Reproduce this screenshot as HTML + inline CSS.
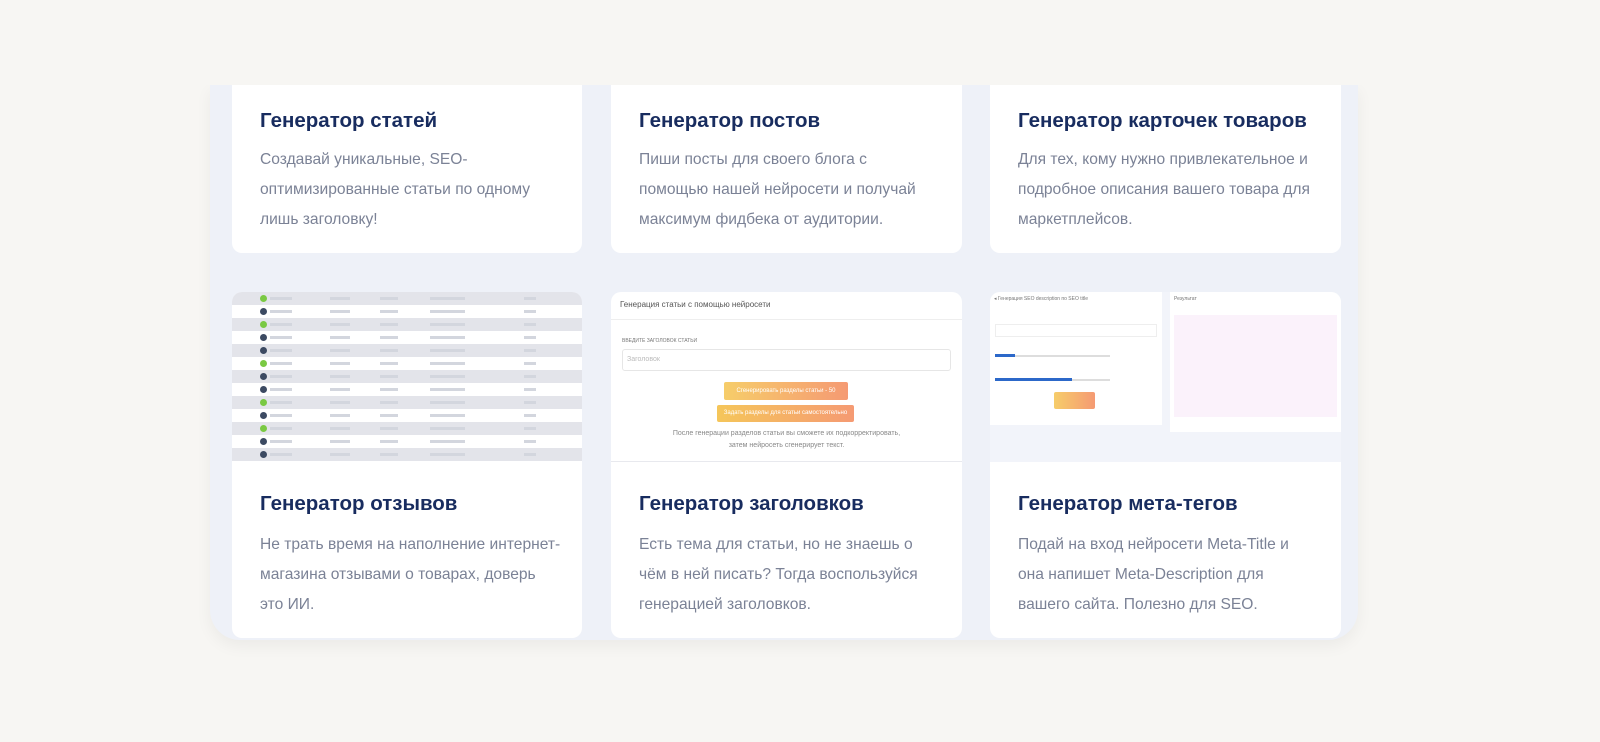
<!DOCTYPE html>
<html><head><meta charset="utf-8"><style>
*{margin:0;padding:0;box-sizing:border-box}
body{width:1600px;height:742px;background:#f7f6f3;font-family:"Liberation Sans",sans-serif;position:relative;overflow:hidden}
.panel{position:absolute;left:210px;top:85px;width:1148px;height:555px;background:#eef1f8;border-radius:0 0 30px 30px;box-shadow:0 6px 16px rgba(0,0,0,0.05)}
.card{position:absolute;background:#fff;border-radius:10px;overflow:hidden}
.card h3{position:absolute;left:28px;font-size:20.5px;font-weight:bold;color:#182c5f}
.card p{position:absolute;left:28px;font-size:15.6px;line-height:30px;color:#7b8296;white-space:nowrap}
.img{position:absolute;left:0;top:0;right:0;height:170px;overflow:hidden}
.row{height:13px;position:relative}
.row.g{background:#e3e4ea}
.row i{position:absolute;top:3px;left:28px;width:7px;height:7px;border-radius:50%;background:#3c4a62}
.row i.gr{background:#7ac943}
.row b{position:absolute;top:5px;height:3px;background:#d3d6de}
</style></head><body>
<div class="panel"></div>

<div class="card" style="left:232px;top:75px;width:350px;height:178px">
<h3 style="top:34px">Генератор статей</h3>
<p style="top:70px">Создавай уникальные, SEO-<br>оптимизированные статьи по одному<br>лишь заголовку!</p></div>
<div class="card" style="left:611px;top:75px;width:351px;height:178px">
<h3 style="top:34px">Генератор постов</h3>
<p style="top:70px">Пиши посты для своего блога с<br>помощью нашей нейросети и получай<br>максимум фидбека от аудитории.</p></div>
<div class="card" style="left:990px;top:75px;width:351px;height:178px">
<h3 style="top:34px">Генератор карточек товаров</h3>
<p style="top:70px">Для тех, кому нужно привлекательное и<br>подробное описания вашего товара для<br>маркетплейсов.</p></div>
<div style="position:absolute;left:200px;top:50px;width:1170px;height:35px;background:#f7f6f3"></div>

<div class="card" style="left:232px;top:292px;width:350px;height:346px">
<div class="img" id="tbl"></div>
<h3 style="top:200px">Генератор отзывов</h3>
<p style="top:238px">Не трать время на наполнение интернет-<br>магазина отзывами о товарах, доверь<br>это ИИ.</p></div>

<div class="card" style="left:611px;top:292px;width:351px;height:346px">
<div class="img" style="border-bottom:1px solid #e8e9ee">
<div style="position:absolute;left:9px;top:8px;font-size:8px;color:#555">Генерация статьи с помощью нейросети</div>
<div style="position:absolute;left:0;right:0;top:27px;height:1px;background:#eee"></div>
<div style="position:absolute;left:11px;top:46px;font-size:5px;color:#777">ВВЕДИТЕ ЗАГОЛОВОК СТАТЬИ</div>
<div style="position:absolute;left:11px;top:57px;width:329px;height:22px;border:1px solid #e6e6e6;border-radius:3px;font-size:7px;color:#bbb;padding:6px 4px">Заголовок</div>
<div style="position:absolute;left:113px;top:90px;width:124px;height:18px;border-radius:2px;background:linear-gradient(90deg,#f6cd6a,#f59a73);font-size:6px;color:#fff;text-align:center;line-height:18px">Сгенерировать разделы статьи - 50</div>
<div style="position:absolute;left:106px;top:113px;width:137px;height:17px;border-radius:2px;background:linear-gradient(90deg,#f5c65a,#f59a73);font-size:6px;color:#fff;text-align:center;line-height:17px">Задать разделы для статьи самостоятельно</div>
<div style="position:absolute;left:0;right:0;top:136px;font-size:7px;line-height:12px;color:#888;text-align:center">После генерации разделов статьи вы сможете их подкорректировать,<br>затем нейросеть сгенерирует текст.</div>
</div>
<h3 style="top:200px">Генератор заголовков</h3>
<p style="top:238px">Есть тема для статьи, но не знаешь о<br>чём в ней писать? Тогда воспользуйся<br>генерацией заголовков.</p></div>

<div class="card" style="left:990px;top:292px;width:351px;height:346px">
<div class="img" style="background:#f2f4fa">
<div style="position:absolute;left:0;top:0;width:172px;height:133px;background:#fff"></div>
<div style="position:absolute;left:180px;top:0;width:171px;height:140px;background:#fff"></div>
<div style="position:absolute;left:184px;top:23px;width:163px;height:102px;background:#fbf2fb"></div>
<div style="position:absolute;left:4px;top:4px;font-size:5px;color:#777">◂ Генерация SEO description по SEO title</div>
<div style="position:absolute;left:184px;top:4px;font-size:5px;color:#777">Результат</div>
<div style="position:absolute;left:5px;top:32px;width:162px;height:13px;border:1px solid #eee"></div>
<div style="position:absolute;left:5px;top:63px;width:115px;height:2px;background:#ddd"></div>
<div style="position:absolute;left:5px;top:62px;width:20px;height:3px;background:#2c68c9"></div>
<div style="position:absolute;left:5px;top:87px;width:115px;height:2px;background:#ddd"></div>
<div style="position:absolute;left:5px;top:86px;width:77px;height:3px;background:#2c68c9"></div>
<div style="position:absolute;left:64px;top:100px;width:41px;height:17px;border-radius:2px;background:linear-gradient(90deg,#f6cd6a,#f59a73)"></div>
</div>
<h3 style="top:200px">Генератор мета-тегов</h3>
<p style="top:238px">Подай на вход нейросети Meta-Title и<br>она напишет Meta-Description для<br>вашего сайта. Полезно для SEO.</p></div>

<script>
var t=document.getElementById('tbl'),h='';
var gr=[1,0,1,0,0,1,0,0,1,0,1,0,0];
for(var i=0;i<13;i++){h+='<div class="row'+(i%2==0?' g':'')+'"><i class="'+(gr[i]?'gr':'')+'"></i><b style="left:38px;width:22px"></b><b style="left:98px;width:20px"></b><b style="left:148px;width:18px"></b><b style="left:198px;width:35px"></b><b style="left:292px;width:12px"></b></div>';}
t.innerHTML=h;
</script>
</body></html>
